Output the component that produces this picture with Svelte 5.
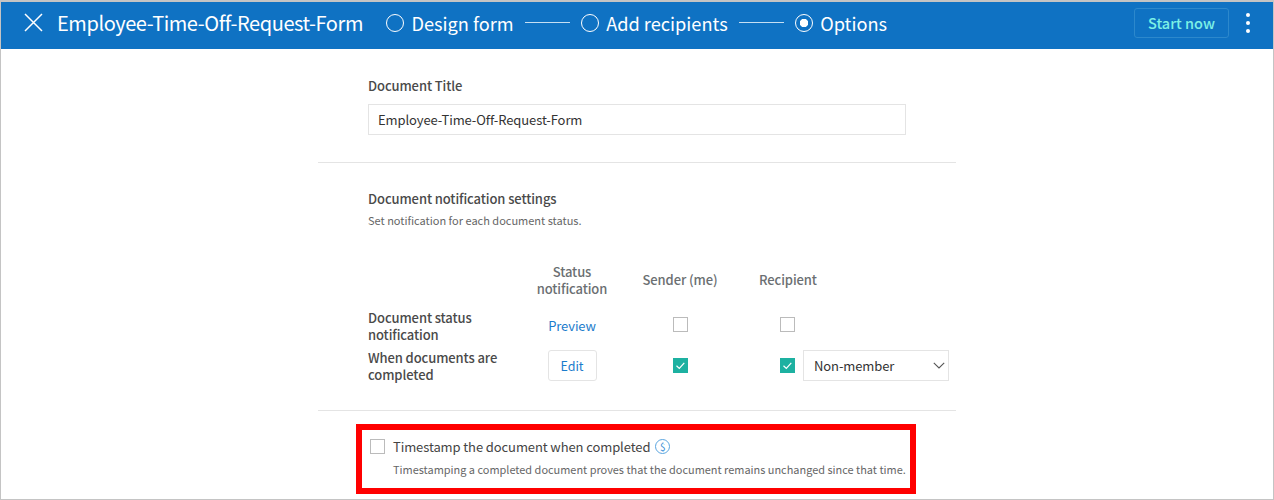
<script>
  const steps = [
    { label: 'Design form', active: false },
    { label: 'Add recipients', active: false },
    { label: 'Options', active: true }
  ]
</script>

<div class="frame">
  <header class="topbar">
    <button class="close" type="button" aria-label="Close">
      <svg width="19" height="19" viewBox="0 0 19 19"><path d="M1 1l17 17M18 1L1 18" stroke="#fff" stroke-width="1.5" fill="none" /></svg>
    </button>
    <h1>Employee-Time-Off-Request-Form</h1>
    <ol class="steps">
      {#each steps as step, i}
        {#if i > 0}<li class="line"></li>{/if}
        <li class="step">
          <span class="radio" class:active={step.active}></span>
          {step.label}
        </li>
      {/each}
    </ol>
    <button class="start" type="button">Start now</button>
    <button class="more" type="button" aria-label="More">
      <i></i><i></i><i></i>
    </button>
  </header>

  <main class="content">
    <section class="title-section">
      <label for="doc-title">Document Title</label>
      <input id="doc-title" type="text" value="Employee-Time-Off-Request-Form" />
    </section>

    <section class="notify">
      <h2>Document notification settings</h2>
      <p>Set notification for each document status.</p>

      <div class="grid">
        <div></div>
        <div class="head center">Status<br />notification</div>
        <div class="head center">Sender (me)</div>
        <div class="head recipient-head">Recipient</div>

        <div class="name">Document status<br />notification</div>
        <div class="center"><a href="#preview">Preview</a></div>
        <div class="center up"><span class="check"></span></div>
        <div class="recipient up"><span class="check"></span></div>

        <div class="name">When documents are<br />completed</div>
        <div class="center"><button class="edit" type="button">Edit</button></div>
        <div class="center">
          <span class="check on">
            <svg width="15" height="15" viewBox="0 0 15 15"><path d="M3.5 7.8l2.8 2.6 5-5.6" stroke="#fff" stroke-width="1.2" fill="none" /></svg>
          </span>
        </div>
        <div class="recipient">
          <span class="check on">
            <svg width="15" height="15" viewBox="0 0 15 15"><path d="M3.5 7.8l2.8 2.6 5-5.6" stroke="#fff" stroke-width="1.2" fill="none" /></svg>
          </span>
          <div class="select">
            <select>
              <option>Non-member</option>
            </select>
            <svg width="12" height="7" viewBox="0 0 12 7"><path d="M.8.8L6 6l5.2-5.2" stroke="#555" stroke-width="1.1" fill="none" /></svg>
          </div>
        </div>
      </div>
    </section>

    <section class="stamp">
      <div class="stamp-row">
        <span class="check"></span>
        <span class="stamp-label">Timestamp the document when completed</span>
        <span class="dollar">$</span>
      </div>
      <p>Timestamping a completed document proves that the document remains unchanged since that time.</p>
    </section>
  </main>
</div>

<style>
  :global(body) {
    margin: 0;
    background: #fff;
  }

  .frame {
    box-sizing: border-box;
    height: 500px;
    overflow: hidden;
    border: 1px solid #c4c4c4;
    border-top-width: 2px;
    font-family: "Noto Sans CJK KR", "Noto Sans", sans-serif;
    color: #333;
  }

  button {
    font: inherit;
    cursor: pointer;
  }

  .topbar {
    box-sizing: border-box;
    display: flex;
    align-items: center;
    height: 47px;
    padding: 0 18px 6px 23px;
    background: #0f72c3;
    color: #fff;
  }

  .close {
    display: flex;
    padding: 0;
    border: 0;
    background: none;
  }

  h1 {
    margin: 0 0 0 14px;
    font-size: 20px;
    font-weight: 400;
    letter-spacing: -0.43px;
    white-space: nowrap;
  }

  .steps {
    display: flex;
    align-items: center;
    flex: 1;
    gap: 11px;
    margin: 0 0 0 23px;
    padding: 0;
    list-style: none;
    font-size: 18.2px;
  }

  .step {
    display: flex;
    align-items: center;
    gap: 7.5px;
  }

  .line {
    width: 45px;
    height: 1px;
    background: #c5dff3;
  }

  .radio {
    box-sizing: border-box;
    width: 18px;
    height: 18px;
    border: 1.5px solid #fff;
    border-radius: 50%;
  }

  .radio.active {
    background: radial-gradient(circle, #fff 0 4px, transparent 4.5px);
  }

  .start {
    width: 95px;
    height: 30px;
    border: 1px solid #2c88cc;
    border-radius: 3px;
    background: none;
    color: #7cf0e6;
    font-size: 14.5px;
    font-weight: 500;
  }

  .more {
    display: flex;
    flex-direction: column;
    align-items: center;
    gap: 4px;
    margin-left: 12px;
    padding: 0;
    width: 14px;
    border: 0;
    background: none;
  }

  .more i {
    width: 4px;
    height: 4px;
    border-radius: 50%;
    background: #fff;
  }

  .content {
    width: 638px;
    margin: 0 auto;
    font-size: 13px;
    letter-spacing: -0.1px;
  }

  .title-section {
    padding: 27px 50px 27px;
    border-bottom: 1px solid #e4e4e4;
  }

  .title-section label {
    display: block;
    margin-bottom: 8px;
    line-height: 20px;
    font-weight: 500;
    color: #4a4a4a;
  }

  input {
    box-sizing: border-box;
    display: block;
    width: 538px;
    height: 31px;
    padding: 0 9px;
    border: 1px solid #e4e4e4;
    font: inherit;
    letter-spacing: inherit;
    color: #333;
  }

  .notify {
    padding: 26px 0 25px 50px;
    border-bottom: 1px solid #e4e4e4;
  }

  h2 {
    margin: 0;
    font-size: 13px;
    font-weight: 500;
    line-height: 20px;
    color: #4a4a4a;
  }

  .notify p {
    margin: 2px 0 0;
    font-size: 11px;
    letter-spacing: 0;
    line-height: 18px;
    color: #666;
  }

  .grid {
    display: grid;
    grid-template-columns: 150px 108px 108px 215px;
    grid-template-rows: 43px 40px 40px;
    margin-top: 33px;
    align-items: center;
  }

  .head {
    padding-bottom: 8px;
    font-weight: 500;
    line-height: 17px;
    color: #6b6f72;
  }

  .center {
    display: flex;
    justify-content: center;
    text-align: center;
  }

  .up {
    padding-bottom: 2px;
  }

  .recipient-head {
    padding-left: 25px;
  }

  .name {
    padding-top: 1px;
    font-weight: 500;
    line-height: 17px;
    color: #4a4a4a;
  }

  a {
    color: #1b7ccc;
    text-decoration: none;
  }

  .edit {
    width: 49px;
    height: 31px;
    padding: 0;
    border: 1px solid #e4e4e4;
    border-radius: 3px;
    background: #fff;
    color: #1b7ccc;
    font-size: 12.5px;
  }

  .check {
    box-sizing: border-box;
    display: block;
    flex: none;
    width: 15px;
    height: 15px;
    border: 1px solid #bbb;
    background: #fff;
  }

  .check.on {
    border: 0;
    background: #1db1a1;
  }

  .check svg {
    display: block;
  }

  .recipient {
    display: flex;
    align-items: center;
    padding-left: 46px;
  }

  .select {
    position: relative;
    margin-left: 8px;
  }

  .select svg {
    position: absolute;
    top: 12px;
    right: 4px;
    pointer-events: none;
  }

  select {
    display: block;
    width: 146px;
    height: 31px;
    padding: 0 10px;
    border: 1px solid #e4e4e4;
    border-radius: 0;
    background: #fff;
    appearance: none;
    font: inherit;
    letter-spacing: inherit;
    color: #333;
  }

  .stamp {
    box-sizing: border-box;
    width: 560px;
    height: 70px;
    margin: 13px 0 0 38px;
    padding: 6px 8px 0;
    border: 6px solid #f00;
  }

  .stamp-row {
    display: flex;
    align-items: center;
    height: 20px;
  }

  .stamp-label {
    margin-left: 8px;
    color: #444;
  }

  .dollar {
    box-sizing: border-box;
    width: 15px;
    height: 15px;
    margin-left: 5px;
    border: 1px solid #5aa5e0;
    border-radius: 50%;
    color: #3b8fd6;
    font-size: 10px;
    line-height: 13px;
    text-align: center;
  }

  .stamp p {
    margin: 4px 0 0 23px;
    font-size: 10.95px;
    letter-spacing: 0;
    line-height: 18px;
    color: #666;
    white-space: nowrap;
  }
</style>
